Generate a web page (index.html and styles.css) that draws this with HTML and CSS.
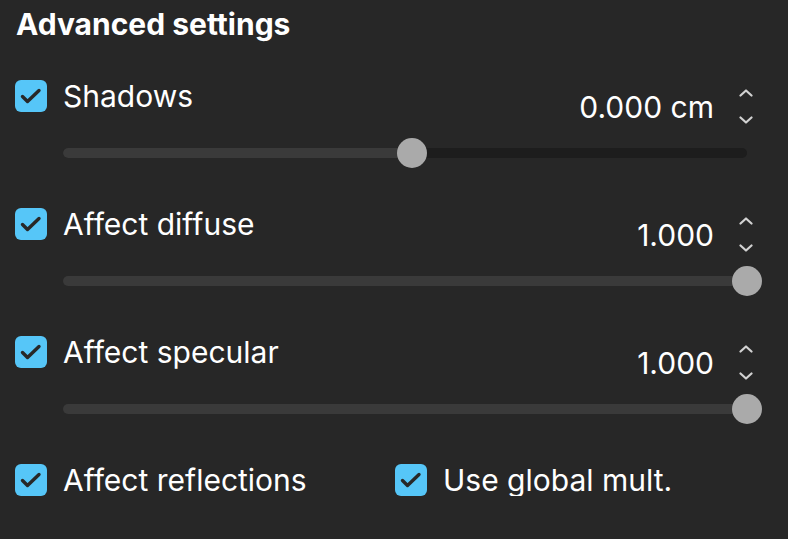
FILE: index.html
```html
<!DOCTYPE html>
<html>
<head>
  <meta charset="UTF-8">
  <title>Advanced settings</title>
  <meta name="viewport" content="width=device-width, initial-scale=1.0">
  <link rel="stylesheet" href="styles.css">
</head>
<body>
  <div class="panel">
    <h2 class="title">Advanced settings</h2>

    <div class="setting">
      <div class="head">
        <label class="check">
          <span class="box"><svg viewBox="0 0 32 32"><path d="M7.5 16.5l5 5 11.5-11"/></svg></span>
          <span class="label">Shadows</span>
        </label>
        <div class="value-box">
          <span class="value">0.000 cm</span>
          <span class="spin">
            <svg viewBox="0 0 14 8"><path d="M1.5 6.5L7 1.5l5.5 5"/></svg>
            <svg viewBox="0 0 14 8"><path d="M1.5 1.5L7 6.5l5.5-5"/></svg>
          </span>
        </div>
      </div>
      <div class="slider">
        <div class="track"><div class="fill" style="width: 51%"></div></div>
        <div class="thumb" style="left: 51%"></div>
      </div>
    </div>

    <div class="setting">
      <div class="head">
        <label class="check">
          <span class="box"><svg viewBox="0 0 32 32"><path d="M7.5 16.5l5 5 11.5-11"/></svg></span>
          <span class="label">Affect diffuse</span>
        </label>
        <div class="value-box">
          <span class="value">1.000</span>
          <span class="spin">
            <svg viewBox="0 0 14 8"><path d="M1.5 6.5L7 1.5l5.5 5"/></svg>
            <svg viewBox="0 0 14 8"><path d="M1.5 1.5L7 6.5l5.5-5"/></svg>
          </span>
        </div>
      </div>
      <div class="slider">
        <div class="track"><div class="fill" style="width: 100%"></div></div>
        <div class="thumb" style="left: 100%"></div>
      </div>
    </div>

    <div class="setting">
      <div class="head">
        <label class="check">
          <span class="box"><svg viewBox="0 0 32 32"><path d="M7.5 16.5l5 5 11.5-11"/></svg></span>
          <span class="label">Affect specular</span>
        </label>
        <div class="value-box">
          <span class="value">1.000</span>
          <span class="spin">
            <svg viewBox="0 0 14 8"><path d="M1.5 6.5L7 1.5l5.5 5"/></svg>
            <svg viewBox="0 0 14 8"><path d="M1.5 1.5L7 6.5l5.5-5"/></svg>
          </span>
        </div>
      </div>
      <div class="slider">
        <div class="track"><div class="fill" style="width: 100%"></div></div>
        <div class="thumb" style="left: 100%"></div>
      </div>
    </div>

    <div class="toggles">
      <label class="check">
        <span class="box"><svg viewBox="0 0 32 32"><path d="M7.5 16.5l5 5 11.5-11"/></svg></span>
        <span class="label">Affect reflections</span>
      </label>
      <label class="check">
        <span class="box"><svg viewBox="0 0 32 32"><path d="M7.5 16.5l5 5 11.5-11"/></svg></span>
        <span class="label">Use global mult.</span>
      </label>
    </div>
  </div>
</body>
</html>
```

FILE: styles.css
```css
body {
  margin: 0;
  background: #272727;
  color: #fff;
  font-family: Inter, "Noto Sans", sans-serif;
}

.panel {
  padding: 8px 35px 0 15px;
}

.title {
  margin: 0 0 40px 1px;
  font-size: 30px;
  line-height: 32px;
  font-weight: 700;
}

.setting {
  margin-bottom: 40px;
}

.head {
  display: flex;
  justify-content: space-between;
  align-items: flex-start;
}

.check {
  display: flex;
  align-items: center;
  gap: 16px;
}

.box {
  width: 32px;
  height: 32px;
  border-radius: 6px;
  background: #56c6f8;
  display: flex;
}

.box svg {
  width: 32px;
  height: 32px;
  fill: none;
  stroke: #282828;
  stroke-width: 3.4;
  stroke-linecap: round;
  stroke-linejoin: round;
}

.label,
.value {
  font-size: 30px;
  line-height: 32px;
}

.value-box {
  margin-top: 9px;
  display: flex;
  align-items: center;
  gap: 25px;
}

.spin {
  display: flex;
  flex-direction: column;
  justify-content: space-between;
  height: 35px;
}

.spin svg {
  width: 14px;
  height: 8px;
  fill: none;
  stroke: #d2d2d2;
  stroke-width: 2.2;
  stroke-linecap: round;
  stroke-linejoin: round;
}

.slider {
  position: relative;
  height: 30px;
  margin: 14px 6px 0 48px;
  display: flex;
  align-items: center;
}

.track {
  flex: 1;
  height: 10px;
  border-radius: 5px;
  background: #1d1d1d;
  overflow: hidden;
}

.fill {
  height: 100%;
  background: #3a3a3a;
}

.thumb {
  position: absolute;
  top: 0;
  width: 30px;
  height: 30px;
  margin-left: -15px;
  border-radius: 50%;
  background: #aaaaaa;
}

.toggles {
  display: grid;
  grid-template-columns: 380px 1fr;
}
```
